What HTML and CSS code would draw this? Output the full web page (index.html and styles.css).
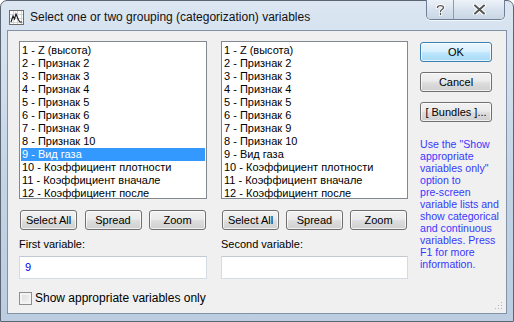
FILE: index.html
```html
<!DOCTYPE html>
<html lang="ru">
<head>
  <meta charset="UTF-8" />
  <title>Select one or two grouping (categorization) variables</title>
  <link rel="stylesheet" href="styles.css">
</head>
<body>
  <div class="window">
    <div class="titlebar">
      <svg class="app-icon" width="15" height="15" viewBox="0 0 15 15">
        <rect x="0.5" y="0.5" width="14" height="14" fill="#fff" stroke="#6d6d6d"/>
        <path d="M1 4.5h13M1 8.5h13M1 12.5h13M4.5 1v13M8.5 1v13M12.5 1v13" stroke="#d4d4d4" stroke-width="1"/>
        <path d="M2 12 L4 6 L5.5 9 L7 4 L9.5 10 L11 12 L13 12" fill="none" stroke="#222" stroke-width="1.2"/>
      </svg>
      <div class="title">Select one or two grouping (categorization) variables</div>
      <div class="caption-btns">
        <div class="cap help">
          <svg width="9" height="12" viewBox="0 0 9 12">
            <path d="M1.5 3.5 C1.5 1 7.5 1 7.5 3.5 C7.5 5.5 4.5 5.5 4.5 7.5 M4.5 9.5 v1" fill="none" stroke="#fff" stroke-width="3.2" stroke-linecap="round"/>
            <path d="M1.5 3.5 C1.5 1 7.5 1 7.5 3.5 C7.5 5.5 4.5 5.5 4.5 7.5 M4.5 9.5 v1" fill="none" stroke="#555" stroke-width="1.4" stroke-linecap="round"/>
          </svg>
        </div>
        <div class="cap close">
          <svg width="13" height="11" viewBox="0 0 13 11">
            <path d="M2 1.5 L11 9.5 M11 1.5 L2 9.5" stroke="#fff" stroke-width="4" stroke-linecap="round"/>
            <path d="M2 1.5 L11 9.5 M11 1.5 L2 9.5" stroke="#555" stroke-width="2" stroke-linecap="round"/>
          </svg>
        </div>
      </div>
    </div>

    <div class="client">
      <div class="main">
        <div class="pane left">
          <ul class="listbox">
            <li>1 - Z (высота)</li>
            <li>2 - Признак 2</li>
            <li>3 - Признак 3</li>
            <li>4 - Признак 4</li>
            <li>5 - Признак 5</li>
            <li>6 - Признак 6</li>
            <li>7 - Признак 9</li>
            <li>8 - Признак 10</li>
            <li class="selected">9 - Вид газа</li>
            <li>10 - Коэффициент плотности</li>
            <li>11 - Коэффициент вначале</li>
            <li>12 - Коэффициент после</li>
          </ul>
          <div class="btn-row">
            <button class="btn">Select All</button>
            <button class="btn">Spread</button>
            <button class="btn">Zoom</button>
          </div>
          <div class="field-label">First variable:</div>
          <div class="field"><span class="value">9</span></div>
        </div>

        <div class="pane right">
          <ul class="listbox">
            <li>1 - Z (высота)</li>
            <li>2 - Признак 2</li>
            <li>3 - Признак 3</li>
            <li>4 - Признак 4</li>
            <li>5 - Признак 5</li>
            <li>6 - Признак 6</li>
            <li>7 - Признак 9</li>
            <li>8 - Признак 10</li>
            <li>9 - Вид газа</li>
            <li>10 - Коэффициент плотности</li>
            <li>11 - Коэффициент вначале</li>
            <li>12 - Коэффициент после</li>
          </ul>
          <div class="btn-row">
            <button class="btn">Select All</button>
            <button class="btn">Spread</button>
            <button class="btn">Zoom</button>
          </div>
          <div class="field-label">Second variable:</div>
          <div class="field"></div>
        </div>

        <div class="side">
          <button class="btn side-btn default">OK</button>
          <button class="btn side-btn">Cancel</button>
          <button class="btn side-btn">[ Bundles ]...</button>
          <p class="hint">Use the "Show<br>appropriate<br>variables only"<br>option to<br>pre-screen<br>variable lists and<br>show categorical<br>and continuous<br>variables. Press<br>F1 for more<br>information.</p>
        </div>
      </div>

      <label class="check-row">
        <span class="checkbox"></span>
        Show appropriate variables only
      </label>
      <div class="grip"></div>
    </div>
  </div>
</body>
</html>
```

FILE: styles.css
```css
* {
  box-sizing: border-box;
}
body {
  margin: 0;
  width: 514px;
  height: 322px;
  overflow: hidden;
  background: #fff;
  font-family: Tahoma, "Liberation Sans", Arial, sans-serif;
  font-size: 11px;
}
.window {
  width: 514px;
  height: 322px;
  border: 1px solid #5c6672;
  border-radius: 7px 7px 0 0;
  background: linear-gradient(#dbe6f2, #c2d3e6 60%, #bccde1);
  display: flex;
  flex-direction: column;
  padding: 0 6px 7px 6px;
}
.titlebar {
  height: 29px;
  display: flex;
  align-items: center;
  position: relative;
}
.app-icon {
  margin-left: 2px;
  margin-top: 3px;
}
.title {
  margin-left: 6px;
  margin-top: 2px;
  font-family: "Liberation Sans", Arial, sans-serif;
  font-size: 12px;
  color: #111;
}
.caption-btns {
  position: absolute;
  top: -1px;
  right: 2px;
  display: flex;
  border: 1px solid #6f7f94;
  border-top: none;
  border-radius: 0 0 5px 5px;
  overflow: hidden;
  box-shadow: 0 1px 0 rgba(255,255,255,0.7);
}
.cap {
  height: 19px;
  display: flex;
  align-items: center;
  justify-content: center;
  background: linear-gradient(#edf2f8, #d8e2ee 50%, #c9d6e5);
}
.help {
  width: 27px;
  border-right: 1px solid #8d9bb0;
}
.close {
  width: 50px;
}
.client {
  flex: 1;
  background: #f0f0f0;
  border: 1px solid #8293a8;
  padding: 10px 13px 0 11px;
  display: flex;
  flex-direction: column;
  position: relative;
}
.main {
  display: flex;
}
.pane {
  display: flex;
  flex-direction: column;
}
.pane.left {
  width: 188px;
}
.pane.right {
  width: 187px;
  margin-left: 14px;
}
.listbox {
  list-style: none;
  margin: 0;
  padding: 2px 1px;
  height: 158px;
  background: #fff;
  border: 1px solid #828790;
}
.listbox li {
  height: 13px;
  line-height: 13px;
  padding-left: 1px;
  color: #000;
  white-space: nowrap;
}
.listbox li.selected {
  background: #3399ff;
  color: #fff;
}
.btn-row {
  display: flex;
  justify-content: space-between;
  margin-top: 11px;
  padding: 0 1px;
}
.btn {
  height: 20px;
  width: 57px;
  padding: 0;
  font-family: Tahoma, "Liberation Sans", Arial, sans-serif;
  font-size: 11px;
  color: #000;
  border: 1px solid #707070;
  border-radius: 3px;
  background: linear-gradient(#f2f2f2 0%, #ebebeb 45%, #dddddd 55%, #cfcfcf 100%);
  box-shadow: inset 0 0 0 1px rgba(255,255,255,0.7);
}
.field-label {
  margin-top: 7px;
  height: 15px;
  line-height: 15px;
  color: #000;
}
.field {
  margin-top: 4px;
  height: 23px;
  background: #fff;
  border: 1px solid #d5dbe2;
  border-top-color: #c3c9d0;
  padding: 4px 5px;
}
.value {
  color: #0000ee;
}
.side {
  margin-left: 12px;
  width: 72px;
  display: flex;
  flex-direction: column;
}
.side-btn {
  width: 72px;
  margin-top: 10px;
}
.side-btn:first-child {
  margin-top: 1px;
}
.side-btn.default {
  border-color: #3c7fb1;
  background: linear-gradient(#eaf6fd 0%, #d9f0fc 45%, #bee6fd 55%, #a7d9f5 100%);
}
.hint {
  margin: 16px 0 0 0;
  font-family: "Liberation Sans", Arial, sans-serif;
  font-size: 10.6px;
  line-height: 12px;
  color: #3838ff;
  white-space: nowrap;
}
.check-row {
  margin-top: 12px;
  display: flex;
  align-items: center;
  color: #000;
  font-size: 12px;
  font-family: "Liberation Sans", Arial, sans-serif;
  height: 14px;
}
.checkbox {
  width: 13px;
  height: 13px;
  border: 1px solid #8e8f8f;
  background: linear-gradient(135deg, #dcdcdc, #f6f6f6);
  box-shadow: inset 0 0 0 2px #f4f4f4;
  margin-right: 3px;
}
.grip {
  position: absolute;
  right: 4px;
  bottom: 4px;
  width: 8px;
  height: 8px;
  background:
    radial-gradient(circle, #b4b4b4 0.8px, transparent 1px) 0 0 / 3px 3px;
  clip-path: polygon(100% 0, 100% 100%, 0 100%);
}
```
